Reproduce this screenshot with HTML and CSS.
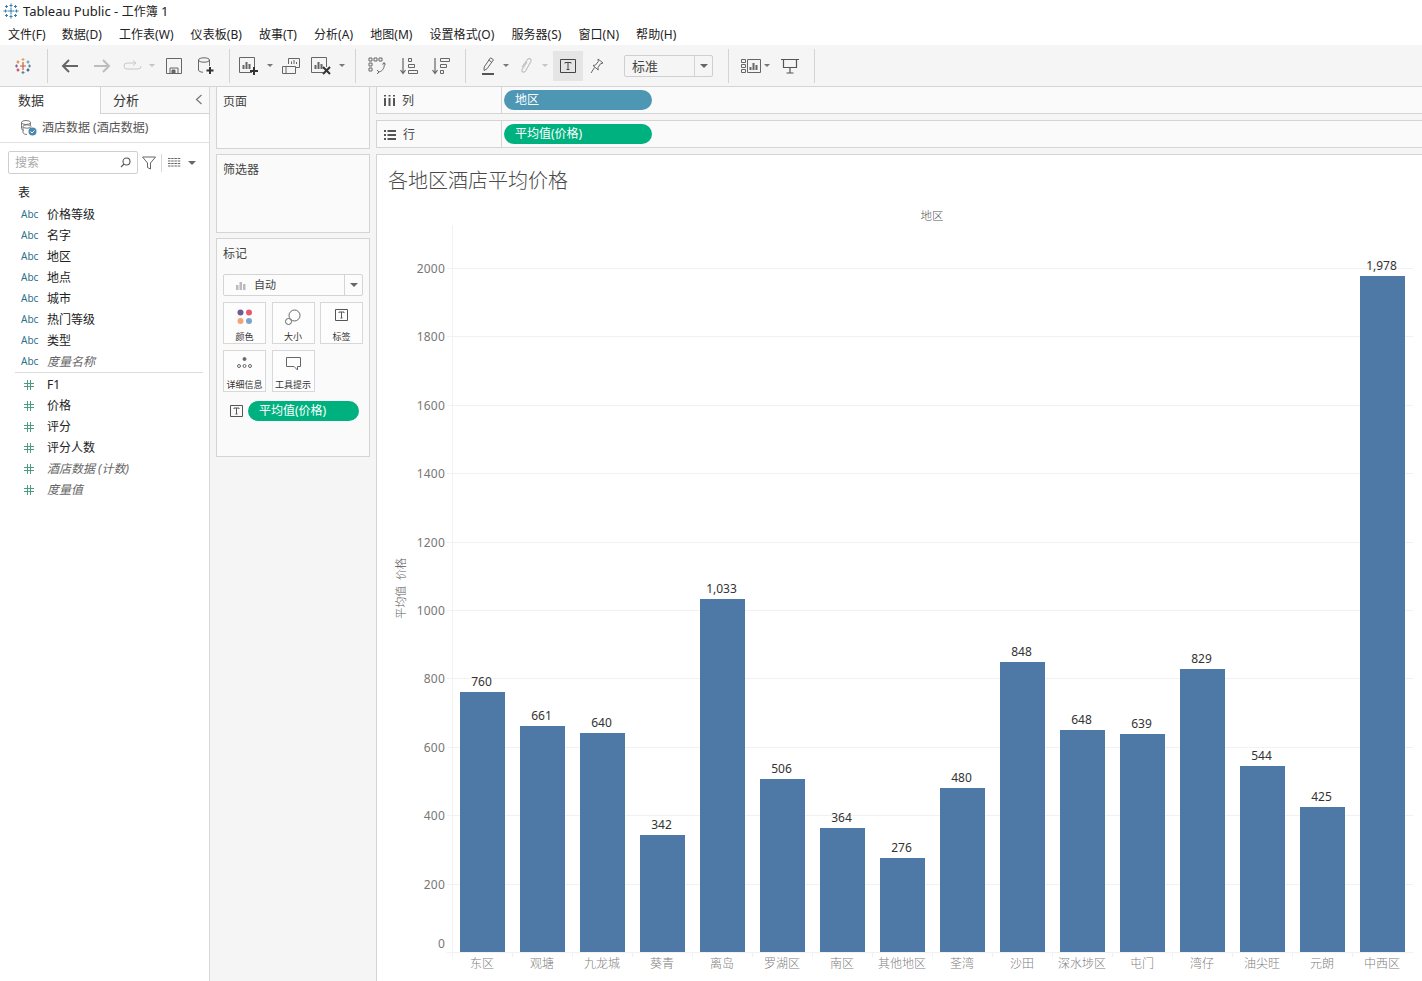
FILE: index.html
```html
<!DOCTYPE html>
<html lang="zh">
<head>
<meta charset="utf-8">
<title>Tableau Public - 工作簿 1</title>
<link rel="stylesheet" href="styles.css">
</head>
<body>
<div class="app">
  <header class="titlebar">
    <svg class="t-logo" width="16" height="16" viewBox="0 0 16 16" fill="none" stroke="#3b7ea8" stroke-width="1"><path d="M8 5v6M5 8h6M8 .5v4M6.500 2.500h3M8 11.500v4M6.500 13.500h3M.5 8h4M2.500 6.500v3M11.500 8h4M13.500 6.500v3M3.500 2v3M2 3.500h3M12.500 2v3M11 3.500h3M3.500 11v3M2 12.500h3M12.500 11v3M11 12.500h3"/></svg>
    <span>Tableau Public - <span class="cjk12">工作簿</span> 1</span>
  </header>
  <nav class="menubar">
    <span>文件(F)</span><span>数据(D)</span><span>工作表(W)</span><span>仪表板(B)</span><span>故事(T)</span><span>分析(A)</span><span>地图(M)</span><span>设置格式(O)</span><span>服务器(S)</span><span>窗口(N)</span><span>帮助(H)</span>
  </nav>
  <div class="toolbar">
    <div class="tool w46">
      <svg width="18" height="18" viewBox="0 0 18 18" fill="none" stroke-width="1.200"><path d="M9 5v8M6 9h6" stroke="#c9603a"/><path d="M9 1v3M7.500 2.500h3" stroke="#e8a33d"/><path d="M9 14v3M7.500 15.500h3" stroke="#5b7fa6"/><path d="M1 9h3M2.500 7.500v3" stroke="#8a5a9a"/><path d="M14 9h3M15.500 7.500v3" stroke="#59879b"/><path d="M4 3.500v3M2.500 5h3" stroke="#e2803a"/><path d="M14 3.500v3M12.500 5h3" stroke="#5b97b5"/><path d="M4 11.500v3M2.500 13h3" stroke="#c23a4a"/><path d="M14 11.500v3M12.500 13h3" stroke="#1f4e79"/></svg>
    </div>
    <i class="sep"></i>
    <i class="gap6"></i>
    <div class="tool w32"><svg width="18" height="14" viewBox="0 0 18 14" fill="none" stroke="#666" stroke-width="2"><path d="M17 7H2M8 1 2 7l6 6"/></svg></div>
    <div class="tool w32"><svg width="18" height="14" viewBox="0 0 18 14" fill="none" stroke="#bdbdbd" stroke-width="2"><path d="M1 7h15M10 1l6 6-6 6"/></svg></div>
    <div class="tool w28"><svg width="19" height="12" viewBox="0 0 19 12" fill="none" stroke="#c8c8c8" stroke-width="1"><path d="M12 3H4a3 3 0 0 0 0 6h11a3 3 0 0 0 3-3M10 .5 13 3l-3 2.500"/></svg></div>
    <div class="caret-cell"><i class="caret pale"></i></div>
    <div class="tool w32"><svg width="16" height="16" viewBox="0 0 16 16" fill="none" stroke="#666"><path d="M.5.500h15v15H.5z"/><path d="M4 15.500V10h8v5.500" fill="none"/><path d="M6 12h3v3H6z" fill="#666"/></svg></div>
    <div class="tool w32"><svg width="18" height="18" viewBox="0 0 18 18" fill="none" stroke="#666"><ellipse cx="7" cy="3" rx="5.500" ry="2.200"/><path d="M1.500 3v10c0 1.200 2 2.200 4.500 2.200M12.500 3v6"/><path d="M13 10v7M9.500 13.500h7" stroke="#333" stroke-width="2"/></svg></div>
    <i class="gap7"></i>
    <i class="sep"></i>
    <i class="gap4"></i>
    <div class="tool w30"><svg width="20" height="18" viewBox="0 0 20 18" fill="none" stroke="#666"><path d="M13 15.500H.5V.5h15V10"/><path d="M4.500 12V8M7.500 12V5M10.500 12V7" stroke-width="2"/><path d="M15 10v8M11 14h8" stroke="#333" stroke-width="2"/></svg></div>
    <div class="caret-cell"><i class="caret"></i></div>
    <div class="tool w30"><svg width="18" height="16" viewBox="0 0 18 16" fill="none" stroke="#666"><path d="M6.500 6V.5h11v9h-4"/><path d="M.5 8.500h13v7H.5zM4 8.500v7"/><path d="M9.500 6V3.500M12 6V2M14.500 6V4" stroke-width="1"/></svg></div>
    <div class="tool w30"><svg width="20" height="18" viewBox="0 0 20 18" fill="none" stroke="#666"><path d="M12 15.500H.5V.5h15V10"/><path d="M4.500 12V8M7.500 12V5M10.500 12V7" stroke-width="2"/><path d="m12 10 7 7M19 10l-7 7" stroke="#333" stroke-width="2"/></svg></div>
    <div class="caret-cell"><i class="caret"></i></div>
    <i class="gap7"></i>
    <i class="sep"></i>
    <i class="gap5"></i>
    <div class="tool w32"><svg width="18" height="18" viewBox="0 0 18 18" fill="none" stroke="#666"><path d="M1 1h3v3H1zM6 1h3v3H6zM11 1h3v3h-3zM1 6h3v3H1zM1 11h3v3H1z"/><path d="M16 6c1 4-1 8-5 9M9 13l2 2-2 2M14.500 7.500 16 5.500l1.500 2" /></svg></div>
    <div class="tool w32"><svg width="18" height="18" viewBox="0 0 18 18" fill="none" stroke="#666"><path d="M3 1v15M.5 13 3 16.500 5.500 13" stroke-width="1.200"/><path d="M8.500 1.500h3v3h-3zM8.500 7.500h6v3h-6zM8.500 13.500h9v3h-9z"/></svg></div>
    <div class="tool w32"><svg width="18" height="18" viewBox="0 0 18 18" fill="none" stroke="#666"><path d="M3 1v15M.5 13 3 16.500 5.500 13" stroke-width="1.200"/><path d="M8.500 1.500h9v3h-9zM8.500 7.500h6v3h-6zM8.500 13.500h3v3h-3z"/></svg></div>
    <i class="gap8"></i>
    <i class="sep"></i>
    <i class="gap10"></i>
    <div class="tool w24"><svg width="15" height="18" viewBox="0 0 15 18" fill="none" stroke="#666"><path d="m9.500.8 3 2-6.500 9-3 1.700.2-3.500zM7.500 3l3 2"/><path d="M1 17h12" stroke-width="2" stroke="#555"/></svg></div>
    <div class="caret-cell"><i class="caret"></i></div>
    <div class="tool w26 lm2"><svg width="13" height="18" viewBox="0 0 13 18" fill="none" stroke="#bdbdbd" stroke-width="1.100"><path d="M2 10 7.500 2.500c1.300-1.800 4.500-.5 3.500 1.800L5.500 14c-1.200 2-4.500 1-3.500-1.500L7 5"/></svg></div>
    <div class="caret-cell"><i class="caret pale"></i></div>
    <div class="tool t-on"><svg width="16" height="14" viewBox="0 0 16 14" fill="none" stroke="#444"><path d="M.5.500h15v13H.5z"/><path d="M5 4.500V3.500h6v1M8 3.500v7M6.500 10.500h3"/></svg></div>
    <div class="tool w28"><svg width="14" height="16" viewBox="0 0 14 16" fill="none" stroke="#666"><path d="m8 1 5 4-2.500.8L8 9.500l.2 2.500L3 7.500 5.500 7l2.800-3.500zM4.500 9.500 1 15"/></svg></div>
    <div class="combo"><span class="combo-text">标准</span><span class="combo-arrow"><i class="caret dark"></i></span></div>
    <i class="sep lm15"></i>
    <i class="gap12"></i>
    <div class="tool w20"><svg width="20" height="14" viewBox="0 0 20 14" fill="none" stroke="#666"><path d="M.5.500h4v3h-4zM.5 5.500h4v3h-4zM.5 10.500h4v3h-4zM6.500.5h13v13h-13z"/><path d="M9.500 11V8M12.500 11V4M15.500 11V6" stroke-width="2"/></svg></div>
    <div class="caret-cell"><i class="caret"></i></div>
    <div class="tool w32 ln3"><svg width="18" height="16" viewBox="0 0 18 16" fill="none" stroke="#555"><path d="M0 1.500h18M2.500 1.500v8h13v-8M9 9.500V15M5.500 15h7" stroke-width="1.200"/></svg></div>
    <i class="gap8"></i>
    <i class="sep"></i>
  </div>

  <main class="main">
    <aside class="datapane">
      <div class="tabs">
        <div class="tab active">数据</div>
        <div class="tab">分析<svg class="collapse" width="8" height="11" viewBox="0 0 8 11" fill="none" stroke="#777" stroke-width="1.200"><path d="M6.500 1 1.500 5.500l5 4.500"/></svg></div>
      </div>
      <div class="source">
        <svg width="17" height="16" viewBox="0 0 17 16" fill="none" stroke="#777"><ellipse cx="6" cy="2.500" rx="4.500" ry="2"/><path d="M1.500 2.500v6c0 1 1 1.500 2 1.800M10.500 2.500v3"/><ellipse cx="7" cy="6.500" rx="4" ry="1.700"/><path d="M3 6.500v6c0 1 2 2 4 2"/><circle cx="12.500" cy="11.500" r="4" fill="#4a8ab0" stroke="none"/><path d="m10.500 11.500 1.500 1.500 2.500-2.500" stroke="#fff"/></svg>
        <span>酒店数据 (酒店数据)</span>
      </div>
      <div class="searchrow">
        <div class="search"><span>搜索</span><svg width="11" height="11" viewBox="0 0 11 11" fill="none" stroke="#555" stroke-width="1.100"><circle cx="6.500" cy="4.500" r="3.500"/><path d="M4 7 1 10"/></svg></div>
        <svg width="14" height="14" viewBox="0 0 14 14" fill="none" stroke="#666"><path d="M.5 1h13L8.500 7v6l-3-1.500V7z"/></svg>
        <i class="vline"></i>
        <svg width="13" height="9" viewBox="0 0 13 9" fill="none" stroke="#666"><path d="M0 .5h13M0 3h13M0 5.500h13M0 8h13" stroke-dasharray="2.500 .7"/></svg>
        <i class="caret dark lm8"></i>
      </div>
      <div class="group-head">表</div>
      <ul class="fields">
        <li><b class="abc">Abc</b><span>价格等级</span></li>
        <li><b class="abc">Abc</b><span>名字</span></li>
        <li><b class="abc">Abc</b><span>地区</span></li>
        <li><b class="abc">Abc</b><span>地点</span></li>
        <li><b class="abc">Abc</b><span>城市</span></li>
        <li><b class="abc">Abc</b><span>热门等级</span></li>
        <li><b class="abc">Abc</b><span>类型</span></li>
        <li><b class="abc">Abc</b><span class="gen">度量名称</span></li>
      </ul>
      <ul class="fields measures">
        <li><b class="num"></b><span>F1</span></li>
        <li><b class="num"></b><span>价格</span></li>
        <li><b class="num"></b><span>评分</span></li>
        <li><b class="num"></b><span>评分人数</span></li>
        <li><b class="num"></b><span class="gen">酒店数据 (计数)</span></li>
        <li><b class="num"></b><span class="gen">度量值</span></li>
      </ul>
    </aside>

    <section class="cards">
      <div class="card pages">页面</div>
      <div class="card filters">筛选器</div>
      <div class="card marks">
        <div class="marks-title">标记</div>
        <div class="marktype">
          <svg width="10" height="9" viewBox="0 0 10 9" fill="#bbb"><path d="M0 4h2.500v5H0zM3.500 1h2.500v8H3.500zM7 3h2.500v6H7z"/></svg>
          <span>自动</span>
          <span class="mt-arrow"><i class="caret dark"></i></span>
        </div>
        <div class="markgrid">
          <div class="mark">
            <svg width="16" height="16" viewBox="0 0 16 16"><circle cx="3.500" cy="3.500" r="3" fill="#6f5b8f"/><circle cx="12" cy="3.500" r="3" fill="#e8596f"/><circle cx="3.500" cy="12" r="3" fill="#f2a477"/><circle cx="12" cy="12" r="3" fill="#7aa4cc"/></svg>
            <span>颜色</span>
          </div>
          <div class="mark">
            <svg width="16" height="16" viewBox="0 0 16 16" fill="none" stroke="#666"><circle cx="9.500" cy="6.500" r="5.500"/><circle cx="3.500" cy="12.500" r="3" fill="#fff"/></svg>
            <span>大小</span>
          </div>
          <div class="mark">
            <svg width="13" height="12" viewBox="0 0 13 12" fill="none" stroke="#555"><path d="M.5.500h12v11H.5z"/><path d="M4 4V3h5v1M6.500 3v6M5.500 9h2"/></svg>
            <span>标签</span>
          </div>
          <div class="mark">
            <svg width="15" height="12" viewBox="0 0 15 12" fill="none" stroke="#666"><circle cx="7.500" cy="2" r="1.500" fill="#666"/><circle cx="2" cy="9" r="1.500"/><circle cx="7.500" cy="9" r="1.500"/><circle cx="13" cy="9" r="1.500"/></svg>
            <span>详细信息</span>
          </div>
          <div class="mark">
            <svg width="15" height="14" viewBox="0 0 15 14" fill="none" stroke="#666"><path d="M.5.500h14v9h-3v3.500l-3.500-3.500H.5z"/></svg>
            <span>工具提示</span>
          </div>
        </div>
        <div class="markrow">
          <svg width="13" height="12" viewBox="0 0 13 12" fill="none" stroke="#555"><path d="M.5.500h12v11H.5z"/><path d="M4 4V3h5v1M6.500 3v6M5.500 9h2"/></svg>
          <span class="pill green small">平均值(价格)</span>
        </div>
      </div>
    </section>

    <section class="viz">
      <div class="shelf">
        <div class="shelf-label"><svg width="11" height="11" viewBox="0 0 11 11" fill="#555"><path d="M0 3h2v8H0zM4.500 3h2v8h-2zM9 3h2v8H9zM0 0h2v1.500H0zM4.500 0h2v1.500h-2zM9 0h2v1.500H9z"/></svg><span>列</span></div>
        <div class="shelf-body"><span class="pill blue">地区</span></div>
      </div>
      <div class="shelf second">
        <div class="shelf-label"><svg width="12" height="10" viewBox="0 0 12 10" fill="#555"><path d="M0 0h2v2H0zM3.500 0H12v2H3.500zM0 4h2v2H0zM3.500 4H12v2H3.500zM0 8h2v2H0zM3.500 8H12v2H3.500z"/></svg><span>行</span></div>
        <div class="shelf-body"><span class="pill green">平均值(价格)</span></div>
      </div>
      <div class="canvas">
        <h1 class="sheet-title">各地区酒店平均价格</h1>
        <div class="col-title">地区</div>
        <div class="plot-row">
          <div class="ticks">
            <div class="tick"><span>2000</span><i></i></div>
            <div class="tick"><span>1800</span><i></i></div>
            <div class="tick"><span>1600</span><i></i></div>
            <div class="tick"><span>1400</span><i></i></div>
            <div class="tick"><span>1200</span><i></i></div>
            <div class="tick"><span>1000</span><i></i></div>
            <div class="tick"><span>800</span><i></i></div>
            <div class="tick"><span>600</span><i></i></div>
            <div class="tick"><span>400</span><i></i></div>
            <div class="tick"><span>200</span><i></i></div>
            <div class="tick zero"><span>0</span><i></i></div>
          </div>
          <div class="ytitle"><span>平均值 价格</span></div>
          <div class="plot">
            <div class="cat"><span>760</span><i style="height:260px"></i></div>
            <div class="cat"><span>661</span><i style="height:226px"></i></div>
            <div class="cat"><span>640</span><i style="height:219px"></i></div>
            <div class="cat"><span>342</span><i style="height:117px"></i></div>
            <div class="cat"><span>1,033</span><i style="height:353px"></i></div>
            <div class="cat"><span>506</span><i style="height:173px"></i></div>
            <div class="cat"><span>364</span><i style="height:124px"></i></div>
            <div class="cat"><span>276</span><i style="height:94px"></i></div>
            <div class="cat"><span>480</span><i style="height:164px"></i></div>
            <div class="cat"><span>848</span><i style="height:290px"></i></div>
            <div class="cat"><span>648</span><i style="height:222px"></i></div>
            <div class="cat"><span>639</span><i style="height:218px"></i></div>
            <div class="cat"><span>829</span><i style="height:283px"></i></div>
            <div class="cat"><span>544</span><i style="height:186px"></i></div>
            <div class="cat"><span>425</span><i style="height:145px"></i></div>
            <div class="cat"><span>1,978</span><i style="height:676px"></i></div>
          </div>
        </div>
        <div class="xaxis">
          <span>东区</span><span>观塘</span><span>九龙城</span><span>葵青</span><span>离岛</span><span>罗湖区</span><span>南区</span><span>其他地区</span><span>荃湾</span><span>沙田</span><span>深水埗区</span><span>屯门</span><span>湾仔</span><span>油尖旺</span><span>元朗</span><span>中西区</span>
        </div>
      </div>
    </section>
  </main>
</div>
</body>
</html>
```
FILE: styles.css
```css
* { box-sizing: border-box; }
html, body { margin: 0; padding: 0; }
body {
  width: 1422px;
  height: 981px;
  overflow: hidden;
  background: #fff;
  color: #333;
  font: 12px/1.3 "Noto Sans", "Noto Sans CJK SC", sans-serif;
}
ul { list-style: none; margin: 0; padding: 0; }
i { display: block; }

.app { display: flex; flex-direction: column; height: 981px; }

.titlebar { display: flex; align-items: center; gap: 4px; height: 22px; padding-left: 3px; font-size: 13px; color: #222; }
.cjk12 { font-size: 12px; }
.menubar { display: flex; align-items: center; gap: 17px; height: 23px; padding: 2px 0 0 8px; font-size: 12px; letter-spacing: .05px; color: #222; }
.menubar span:first-child { margin-right: -1px; }

.toolbar { display: flex; align-items: center; height: 41px; background: #f5f5f5; }
.tool { display: flex; align-items: center; justify-content: center; height: 30px; flex: none; }
.w20 { width: 20px; }
.w24 { width: 24px; }
.w26 { width: 26px; }
.w28 { width: 28px; }
.w30 { width: 30px; }
.w32 { width: 32px; }
.w46 { width: 47px; padding-right: 1px; }
.lm2 { margin-left: 1px; }
.ln3 { margin-left: 1px; }
.sep { width: 1px; height: 34px; background: #d4d4d4; flex: none; }
.gap4 { width: 4px; flex: none; }
.gap5 { width: 5px; flex: none; }
.gap6 { width: 6px; flex: none; }
.gap7 { width: 7px; flex: none; }
.gap8 { width: 8px; flex: none; }
.gap10 { width: 10px; flex: none; }
.gap12 { width: 12px; flex: none; }
.lm15 { margin-left: 15px; }
.lm8 { margin-left: 3px; }
.caret-cell { width: 12px; flex: none; display: flex; justify-content: center; }
.caret { width: 0; height: 0; border: 3px solid transparent; border-top: 3px solid #777; border-bottom: 0; }
.caret.pale { border-top-color: #c4c4c4; }
.caret.dark { border-width: 4px 4px 0; border-top-color: #666; }
.t-on { width: 30px; background: #e5e5e5; margin-left: 2px; }
.combo { display: flex; width: 89px; height: 22px; margin-left: 13px; background: #f5f5f5; border: 1px solid #cfcfcf; border-radius: 2px; flex: none; }
.combo-text { flex: 1; padding-left: 7px; line-height: 20px; font-size: 13px; color: #444; }
.combo-arrow { display: flex; align-items: center; justify-content: center; width: 18px; border-left: 1px solid #d4d4d4; }

.main { display: flex; flex: 1; min-height: 0; background: #f5f5f5; border-top: 1px solid #d4d4d4; }

.datapane { width: 210px; flex: none; background: #fff; border-right: 1px solid #d8d8d8; }
.tabs { display: flex; height: 27px; }
.tab { position: relative; line-height: 26px; font-size: 13px; color: #333; }
.tab.active { width: 100px; padding-left: 18px; }
.tab:not(.active) { flex: 1; padding-left: 12px; border-left: 1px solid #d4d4d4; border-bottom: 1px solid #d4d4d4; background: #f9f9f9; }
.collapse { position: absolute; right: 6px; top: 7px; }
.source { display: flex; align-items: center; gap: 5px; height: 29px; padding-left: 20px; border-bottom: 1px solid #e2e2e2; color: #555; font-size: 12px; }
.searchrow { display: flex; align-items: center; gap: 4px; height: 23px; margin: 8px 0 0 8px; }
.search { display: flex; align-items: center; justify-content: space-between; width: 130px; height: 23px; padding: 0 6px; border: 1px solid #cfcfcf; border-radius: 2px; color: #aaa; font-size: 12px; }
.vline { width: 1px; height: 18px; margin: 0 2px 0 1px; background: #d8d8d8; }
.group-head { margin: 10px 0 0 18px; height: 20px; line-height: 18px; font-size: 12px; color: #222; }
.fields li { display: flex; align-items: center; height: 21px; color: #222; font-size: 12px; }
.measures { margin: 0 6px 0 15px; padding-top: 1px; border-top: 1px solid #dcdcdc; }
.measures li { margin-right: -6px; margin-left: -15px; }
.abc { width: 47px; padding-left: 21px; font-weight: 400; font-size: 10px; color: #2f6f8f; flex: none; }
.num {
  width: 10px;
  height: 10px;
  margin: 0 13px 0 24px;
  flex: none;
  background:
    linear-gradient(#4a9d7f, #4a9d7f) 3px 0 / 1px 10px no-repeat,
    linear-gradient(#4a9d7f, #4a9d7f) 6px 0 / 1px 10px no-repeat,
    linear-gradient(#4a9d7f, #4a9d7f) 0 3px / 10px 1px no-repeat,
    linear-gradient(#4a9d7f, #4a9d7f) 0 6px / 10px 1px no-repeat;
}
.gen { font-style: italic; color: #666; }

.cards { width: 154px; margin-left: 6px; flex: none; display: flex; flex-direction: column; gap: 5px; }
.card { background: #fafafa; border: 1px solid #d4d4d4; padding: 7px 6px 6px; font-size: 12px; color: #444; margin-top: -1px; }
.card + .card { margin-top: 0; }
.pages { height: 63px; }
.filters { height: 79px; }
.marks { height: 219px; }
.marks-title { height: 28px; font-size: 12px; color: #444; }
.marktype { display: flex; align-items: center; width: 140px; height: 22px; padding-left: 12px; border: 1px solid #d4d4d4; border-radius: 2px; background: #fcfcfc; font-size: 11px; color: #444; gap: 8px; }
.mt-arrow { display: flex; align-items: center; justify-content: center; width: 18px; height: 100%; margin-left: auto; border-left: 1px solid #d4d4d4; }
.markgrid { display: grid; grid-template-columns: 43px 43px 43px; grid-auto-rows: 42px; column-gap: 5.500px; row-gap: 6px; margin-top: 6px; }
.mark { display: flex; flex-direction: column; align-items: center; justify-content: space-between; padding: 6px 0 0; border: 1px solid #d8d8d8; background: #fdfdfd; font-size: 9px; line-height: 12px; color: #333; white-space: nowrap; overflow: hidden; }
.markrow { display: flex; align-items: center; gap: 5px; margin: 9px 0 0 7px; }

.pill { display: block; height: 20px; line-height: 20px; padding-left: 11px; border-radius: 10px; color: #fff; font-size: 12px; width: 148px; }
.pill.blue { background: #4d96b4; }
.pill.green { background: #00b180; }
.pill.small { width: 111px; }

.viz { flex: 1; min-width: 0; margin-left: 6px; display: flex; flex-direction: column; }
.shelf { display: flex; height: 27px; margin-top: 0; flex: none; border: 1px solid #d4d4d4; border-width: 0 0 1px 1px; background: #fafafa; }
.shelf.second { height: 28px; margin-top: 6px; border-top-width: 1px; }
.shelf-label { display: flex; align-items: center; gap: 7px; width: 125px; padding: 1px 0 0 7px; border-right: 1px solid #d4d4d4; color: #444; font-size: 12px; }
.shelf-body { flex: 1; display: flex; align-items: center; padding-left: 2px; }
.canvas { flex: 1; min-height: 0; margin-top: 6px; background: #fff; border-left: 1px solid #d4d4d4; border-top: 1px solid #d4d4d4; display: flex; flex-direction: column; }
.sheet-title { margin: 0; height: 52px; padding: 11px 0 0 11px; font: 300 20px/30px "Liberation Serif", "Noto Sans CJK SC", serif; color: #4a4a4a; }
.col-title { height: 18px; width: 1035px; padding-left: 75px; text-align: center; font: 300 11.500px/18px "Liberation Serif", "Noto Sans CJK SC", serif; color: #555; }
.plot-row { position: relative; display: flex; height: 727px; flex: none; }
.ticks { position: absolute; left: 0; right: 9px; top: 0; bottom: 0; display: flex; flex-direction: column; justify-content: flex-end; }
.tick { display: flex; align-items: flex-start; height: 68.400px; flex: none; }
.tick span { width: 68px; text-align: right; font-size: 12px; letter-spacing: .2px; line-height: 16px; color: #777; transform: translateY(-7px); flex: none; }
.tick i { flex: 1; margin-left: 2px; height: 1px; background: #f1f1f1; }
.tick.zero { height: 0; }
.tick.zero span { transform: translateY(-16px); }
.ytitle { width: 75px; flex: none; display: flex; align-items: center; padding-left: 16px; }
.ytitle span { writing-mode: vertical-rl; text-orientation: sideways; transform: rotate(180deg); font: 300 11px/16px "Liberation Serif", "Noto Sans CJK SC", serif; word-spacing: 3px; color: #5a5a5a; white-space: nowrap; }
.plot { position: relative; display: flex; align-items: flex-end; width: 960px; box-shadow: inset 1px 0 0 #f1f1f1; }
.cat { width: 60px; flex: none; display: flex; flex-direction: column; align-items: center; padding-right: 7px; padding-left: 8px; }
.cat i { width: 45px; background: #4e79a7; }
.cat span { font-size: 12px; line-height: 16px; padding: 0 2px 2px 0; color: #333; }
.xaxis { display: flex; padding-left: 75px; }
.xaxis span { width: 60px; height: 29px; flex: none; text-align: center; font: 300 12px/25px "Liberation Serif", "Noto Sans CJK SC", serif; color: #808080; background: linear-gradient(#f0f0f0, #f0f0f0) left top / 1px 5px no-repeat; white-space: nowrap; }
```
